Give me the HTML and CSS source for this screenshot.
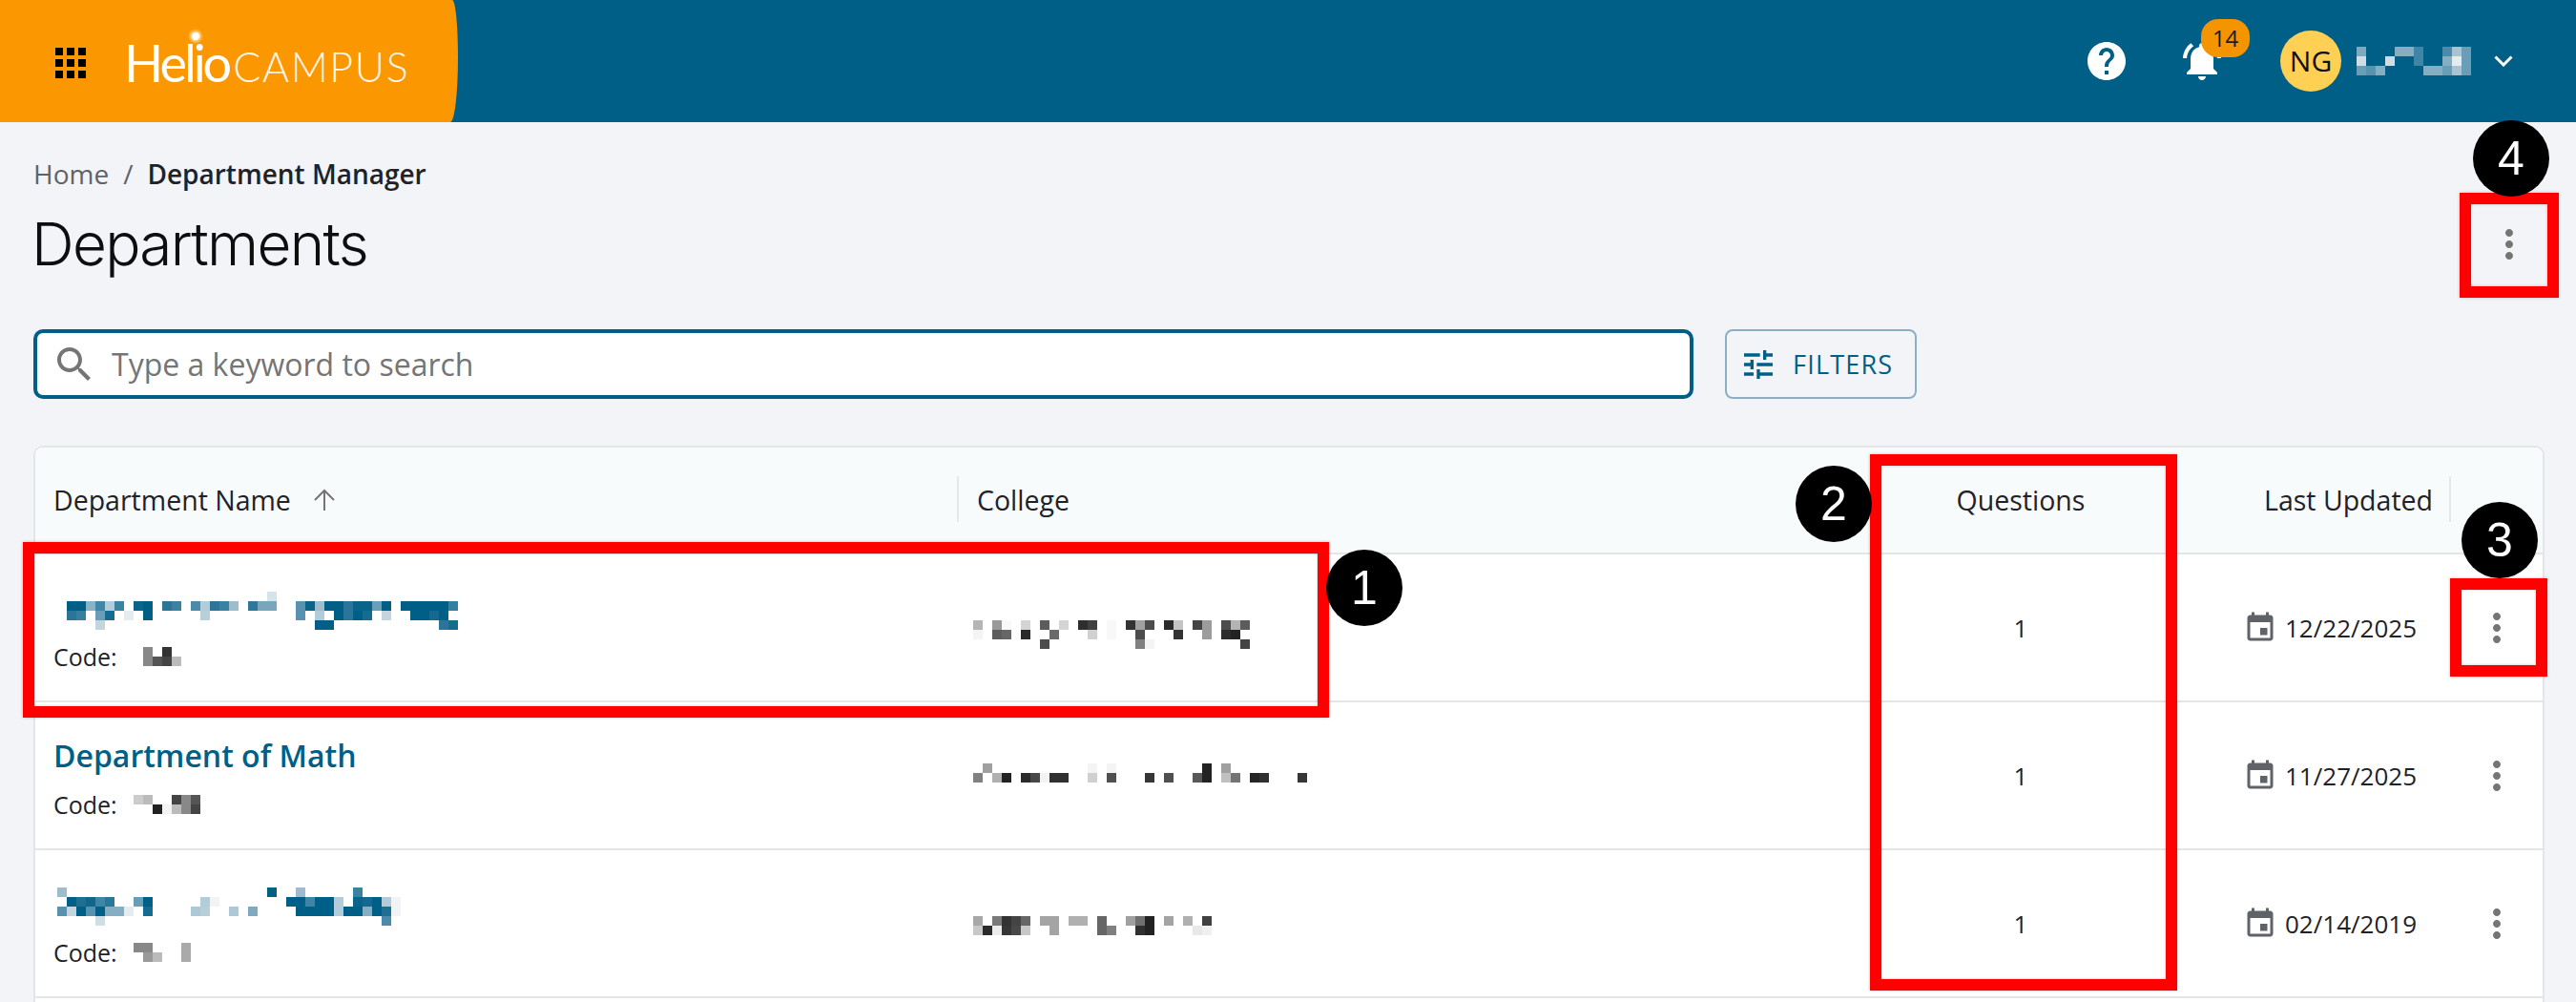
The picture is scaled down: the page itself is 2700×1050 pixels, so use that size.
FILE: index.html
```html
<!DOCTYPE html>
<html lang="en">
<head>
  <meta charset="UTF-8">
  <title>Departments</title>
  <link rel="stylesheet" href="styles.css">
</head>
<body>
  <svg class="icon-defs" aria-hidden="true">
    <symbol id="i-more" viewBox="0 0 24 24"><path d="M12 8c1.1 0 2-.9 2-2s-.9-2-2-2-2 .9-2 2 .9 2 2 2zm0 2c-1.1 0-2 .9-2 2s.9 2 2 2 2-.9 2-2-.9-2-2-2zm0 6c-1.1 0-2 .9-2 2s.9 2 2 2 2-.9 2-2-.9-2-2-2z"/></symbol>
    <symbol id="i-event" viewBox="0 0 24 24"><path d="M17 12h-5v5h5v-5zM16 1v2H8V1H6v2H5c-1.11 0-1.99.9-1.99 2L3 19c0 1.1.89 2 2 2h14c1.1 0 2-.9 2-2V5c0-1.1-.9-2-2-2h-1V1h-2zm3 18H5V8h14v11z"/></symbol>
  </svg>

  <!-- Top bar -->
  <header class="topbar">
    <div class="brand">
      <svg class="apps-icon" width="32" height="32" viewBox="0 0 32 32">
        <path d="M0 0h8v8H0zM12 0h8v8h-8zM24 0h8v8h-8zM0 12h8v8H0zM12 12h8v8h-8zM24 12h8v8h-8zM0 24h8v8H0zM12 24h8v8h-8zM24 24h8v8h-8z"/>
      </svg>
      <div class="logo"><span class="logo-helio">Helio</span><span class="logo-campus">CAMPUS</span><span class="logo-spark"></span></div>
    </div>
    <div class="topbar-tools">
      <svg class="tool-help" width="48" height="48" viewBox="0 0 24 24"><path d="M12 2C6.48 2 2 6.48 2 12s4.48 10 10 10 10-4.48 10-10S17.52 2 12 2zm1 17h-2v-2h2v2zm2.07-7.75l-.9.92C13.45 12.9 13 13.5 13 15h-2v-.5c0-1.1.45-2.1 1.17-2.83l1.24-1.26c.37-.36.59-.86.59-1.41 0-1.1-.9-2-2-2s-2 .9-2 2H8c0-2.21 1.79-4 4-4s4 1.79 4 4c0 .88-.36 1.68-.93 2.25z"/></svg>
      <div class="tool-bell">
        <svg width="48" height="48" viewBox="0 0 24 24"><path d="M7.58 4.08L6.15 2.65C3.75 4.48 2.17 7.3 2.03 10.5h2c.15-2.65 1.51-4.97 3.55-6.42zm12.39 6.42h2c-.15-3.2-1.73-6.02-4.12-7.85l-1.42 1.43c2.02 1.45 3.39 3.77 3.54 6.42zM18 11c0-3.07-1.64-5.64-4.5-6.32V4c0-.83-.67-1.5-1.5-1.5s-1.5.67-1.5 1.5v.68C7.63 5.36 6 7.92 6 11v5l-2 2v1h16v-1l-2-2v-5zm-6 11c.14 0 .27-.01.4-.04.65-.14 1.18-.58 1.44-1.18.1-.24.15-.5.15-.78h-4c.01 1.1.9 2 2.01 2z"/></svg>
        <span class="bell-count">14</span>
      </div>
      <div class="avatar">NG</div>
      <svg class="mosaic user-name" width="120" height="30" viewBox="0 0 12 3">
        <rect x="0" y="0" fill="#7fa9bf"/><rect x="4" y="0" fill="#86aec3"/><rect x="5" y="0" fill="#86aec3"/><rect x="6" y="0" fill="#3f85a5"/><rect x="9" y="0" fill="#4a8bab"/><rect x="10" y="0" fill="#a8c4d3"/><rect x="11" y="0" fill="#6a9db6"/>
        <rect x="0" y="1" fill="#cfdde5"/><rect x="3" y="1" fill="#cfdde5"/><rect x="6" y="1" fill="#3f85a5"/><rect x="9" y="1" fill="#86aec3"/><rect x="10" y="1" fill="#e4ecf0"/><rect x="11" y="1" fill="#6a9db6"/>
        <rect x="0" y="2" fill="#6a9db6"/><rect x="1" y="2" fill="#5792ae"/><rect x="2" y="2" fill="#86aec3"/><rect x="7" y="2" fill="#86aec3"/><rect x="8" y="2" fill="#86aec3"/><rect x="9" y="2" fill="#6a9db6"/><rect x="10" y="2" fill="#a8c4d3"/><rect x="11" y="2" fill="#6a9db6"/>
      </svg>
      <svg class="user-chevron" width="20" height="12" viewBox="0 0 20 12"><path d="M1.5 1.5L10 10l8.5-8.5"/></svg>
    </div>
  </header>

  <main class="page">
    <nav class="breadcrumb"><span class="crumb-home">Home</span><span class="crumb-sep">/</span><span class="crumb-current">Department Manager</span></nav>
    <div class="title-row">
      <h1>Departments</h1>
      <svg class="more-icon page-more" width="48" height="48"><use href="#i-more"/></svg>
    </div>

    <div class="search-row">
      <label class="search-box">
        <svg width="48" height="48" viewBox="0 0 24 24"><path d="M15.5 14h-.79l-.28-.27C15.41 12.59 16 11.11 16 9.5 16 5.91 13.09 3 9.5 3S3 5.91 3 9.5 5.91 16 9.5 16c1.61 0 3.09-.59 4.23-1.57l.27.28v.79l5 4.99L20.49 19l-4.99-5zm-6 0C7.01 14 5 11.99 5 9.5S7.01 5 9.5 5 14 7.01 14 9.5 11.99 14 9.5 14z"/></svg>
        <input type="text" class="search-input" placeholder="Type a keyword to search">
      </label>
      <button class="filters-button">
        <svg width="40" height="40" viewBox="0 0 24 24"><path d="M3 17v2h6v-2H3zM3 5v2h10V5H3zm10 16v-2h8v-2h-8v-2h-2v6h2zM7 9v2H3v2h4v2h2V9H7zm14 4v-2H11v2h10zm-6-4h2V7h4V5h-4V3h-2v6z"/></svg>
        FILTERS
      </button>
    </div>

    <!-- Departments table -->
    <section class="table">
      <div class="table-row table-head">
        <div class="cell cell-name">Department Name
          <svg class="sort-icon" width="26" height="24" viewBox="0 0 26 24"><path d="M13 23V2M3 12L13 2l10 10"/></svg>
        </div>
        <div class="cell cell-college">College</div>
        <div class="cell cell-questions">Questions</div>
        <div class="cell cell-updated">Last Updated</div>
        <div class="cell"></div>
      </div>

      <div class="table-row">
        <div class="cell cell-name">
          <svg class="mosaic name-mosaic" width="410" height="40" viewBox="0 0 41 4">
            <rect x="21" y="0" fill="#d5e3ea"/>
            <rect x="0" y="1" fill="#005f87"/><rect x="1" y="1" fill="#005f87"/><rect x="2" y="1" fill="#8ab2c6"/><rect x="3" y="1" fill="#3f86a7"/><rect x="4" y="1" fill="#b3ccd9"/><rect x="5" y="1" fill="#3a83a3"/><rect x="7" y="1" fill="#0b6489"/><rect x="8" y="1" fill="#005f87"/><rect x="10" y="1" fill="#2a7598"/><rect x="11" y="1" fill="#3a81a2"/><rect x="13" y="1" fill="#4a8bab"/><rect x="14" y="1" fill="#b3ccd9"/><rect x="15" y="1" fill="#2a7598"/><rect x="16" y="1" fill="#3a81a2"/><rect x="17" y="1" fill="#9dbdcd"/><rect x="19" y="1" fill="#2f789a"/><rect x="20" y="1" fill="#78a6bd"/><rect x="21" y="1" fill="#78a6bd"/><rect x="24" y="1" fill="#5792ae"/><rect x="25" y="1" fill="#0a6489"/><rect x="26" y="1" fill="#9dbdcd"/><rect x="27" y="1" fill="#005f87"/><rect x="28" y="1" fill="#005f87"/><rect x="29" y="1" fill="#2a7598"/><rect x="30" y="1" fill="#0a6489"/><rect x="31" y="1" fill="#0a6489"/><rect x="32" y="1" fill="#6b9eb7"/><rect x="33" y="1" fill="#005f87"/><rect x="35" y="1" fill="#005f87"/><rect x="36" y="1" fill="#005f87"/><rect x="37" y="1" fill="#005f87"/><rect x="38" y="1" fill="#005f87"/><rect x="39" y="1" fill="#005f87"/><rect x="40" y="1" fill="#35809f"/>
            <rect x="0" y="2" fill="#2a7598"/><rect x="1" y="2" fill="#35809f"/><rect x="3" y="2" fill="#6a9db6"/><rect x="4" y="2" fill="#146c90"/><rect x="6" y="2" fill="#e4ecf0"/><rect x="8" y="2" fill="#005f87"/><rect x="14" y="2" fill="#b8ced9"/><rect x="24" y="2" fill="#5792ae"/><rect x="26" y="2" fill="#b3ccd9"/><rect x="28" y="2" fill="#005f87"/><rect x="29" y="2" fill="#2a7598"/><rect x="30" y="2" fill="#005f87"/><rect x="31" y="2" fill="#156c91"/><rect x="33" y="2" fill="#c4d5de"/><rect x="36" y="2" fill="#005f87"/><rect x="37" y="2" fill="#005f87"/><rect x="38" y="2" fill="#15698f"/><rect x="39" y="2" fill="#005f87"/>
            <rect x="3" y="3" fill="#c4d5de"/><rect x="26" y="3" fill="#005f87"/><rect x="27" y="3" fill="#005f87"/><rect x="39" y="3" fill="#2a7598"/><rect x="40" y="3" fill="#146c90"/>
          </svg>
          <div class="dept-code">Code:
            <svg class="mosaic" width="50" height="20" viewBox="0 0 5 2">
              <rect x="1" y="0" fill="#888"/><rect x="3" y="0" fill="#333"/>
              <rect x="1" y="1" fill="#888"/><rect x="2" y="1" fill="#555"/><rect x="3" y="1" fill="#444"/><rect x="4" y="1" fill="#bbb"/>
            </svg>
          </div>
        </div>
        <div class="cell cell-college">
          <svg class="mosaic college-mosaic" width="290" height="30" viewBox="0 0 29 3">
            <rect x="0" y="0" fill="#b5b5b5"/><rect x="2" y="0" fill="#999"/><rect x="3" y="0" fill="#f8f8f8"/><rect x="5" y="0" fill="#d4d4d4"/><rect x="7" y="0" fill="#5c5c5c"/><rect x="9" y="0" fill="#d4d4d4"/><rect x="11" y="0" fill="#2e2e2e"/><rect x="12" y="0" fill="#404040"/><rect x="14" y="0" fill="#f8f8f8"/><rect x="16" y="0" fill="#333"/><rect x="17" y="0" fill="#a0a0a0"/><rect x="18" y="0" fill="#4c4c4c"/><rect x="20" y="0" fill="#2a2a2a"/><rect x="21" y="0" fill="#c4c4c4"/><rect x="23" y="0" fill="#444"/><rect x="24" y="0" fill="#9c9c9c"/><rect x="26" y="0" fill="#4c4c4c"/><rect x="27" y="0" fill="#b4b4b4"/><rect x="28" y="0" fill="#5c5c5c"/>
            <rect x="0" y="1" fill="#f4f4f4"/><rect x="2" y="1" fill="#5c5c5c"/><rect x="3" y="1" fill="#666"/><rect x="5" y="1" fill="#2a2a2a"/><rect x="8" y="1" fill="#6a6a6a"/><rect x="12" y="1" fill="#d0d0d0"/><rect x="14" y="1" fill="#f8f8f8"/><rect x="17" y="1" fill="#4c4c4c"/><rect x="21" y="1" fill="#333"/><rect x="24" y="1" fill="#9c9c9c"/><rect x="26" y="1" fill="#2c2c2c"/><rect x="27" y="1" fill="#222"/>
            <rect x="7" y="2" fill="#4c4c4c"/><rect x="17" y="2" fill="#808080"/><rect x="18" y="2" fill="#f4f4f4"/><rect x="28" y="2" fill="#444"/>
          </svg>
        </div>
        <div class="cell cell-questions">1</div>
        <div class="cell cell-updated"><svg class="event-icon" width="36" height="36"><use href="#i-event"/></svg>12/22/2025</div>
        <div class="cell cell-actions"><svg class="more-icon" width="48" height="48"><use href="#i-more"/></svg></div>
      </div>

      <div class="table-row">
        <div class="cell cell-name">
          <a class="dept-link">Department of Math</a>
          <div class="dept-code">Code:
            <svg class="mosaic" width="70" height="20" viewBox="0 0 7 2">
              <rect x="0" y="0" fill="#ccc"/><rect x="1" y="0" fill="#bbb"/><rect x="4" y="0" fill="#444"/><rect x="5" y="0" fill="#888"/><rect x="6" y="0" fill="#555"/>
              <rect x="2" y="1" fill="#222"/><rect x="3" y="1" fill="#f4f4f4"/><rect x="4" y="1" fill="#bbb"/><rect x="5" y="1" fill="#888"/><rect x="6" y="1" fill="#444"/>
            </svg>
          </div>
        </div>
        <div class="cell cell-college">
          <svg class="mosaic college-mosaic college-mosaic-mid" width="350" height="20" viewBox="0 0 35 2">
            <rect x="1" y="0" fill="#a0a0a0"/><rect x="12" y="0" fill="#f4f4f4"/><rect x="14" y="0" fill="#f4f4f4"/><rect x="24" y="0" fill="#222"/><rect x="26" y="0" fill="#a0a0a0"/>
            <rect x="0" y="1" fill="#808080"/><rect x="2" y="1" fill="#b0b0b0"/><rect x="3" y="1" fill="#222"/><rect x="5" y="1" fill="#2a2a2a"/><rect x="6" y="1" fill="#484848"/><rect x="7" y="1" fill="#f2f2f2"/><rect x="8" y="1" fill="#303030"/><rect x="9" y="1" fill="#303030"/><rect x="12" y="1" fill="#d0d0d0"/><rect x="14" y="1" fill="#505050"/><rect x="18" y="1" fill="#363636"/><rect x="20" y="1" fill="#505050"/><rect x="23" y="1" fill="#585858"/><rect x="24" y="1" fill="#222"/><rect x="26" y="1" fill="#c0c0c0"/><rect x="27" y="1" fill="#747474"/><rect x="29" y="1" fill="#252525"/><rect x="30" y="1" fill="#303030"/><rect x="34" y="1" fill="#363636"/>
          </svg>
        </div>
        <div class="cell cell-questions">1</div>
        <div class="cell cell-updated"><svg class="event-icon" width="36" height="36"><use href="#i-event"/></svg>11/27/2025</div>
        <div class="cell cell-actions"><svg class="more-icon" width="48" height="48"><use href="#i-more"/></svg></div>
      </div>

      <div class="table-row">
        <div class="cell cell-name">
          <svg class="mosaic name-mosaic name-mosaic-wide" width="360" height="40" viewBox="0 0 36 4">
            <rect x="0" y="0" fill="#9dbdcd"/><rect x="22" y="0" fill="#005f87"/><rect x="25" y="0" fill="#9dbdcd"/><rect x="31" y="0" fill="#3a81a2"/>
            <rect x="1" y="1" fill="#005f87"/><rect x="2" y="1" fill="#1f6f93"/><rect x="3" y="1" fill="#0f678c"/><rect x="4" y="1" fill="#3f85a5"/><rect x="5" y="1" fill="#2a7598"/><rect x="8" y="1" fill="#6a9db6"/><rect x="9" y="1" fill="#005f87"/><rect x="15" y="1" fill="#b3ccd9"/><rect x="16" y="1" fill="#f0f4f6"/><rect x="24" y="1" fill="#005f87"/><rect x="25" y="1" fill="#005f87"/><rect x="26" y="1" fill="#3f85a5"/><rect x="27" y="1" fill="#005f87"/><rect x="28" y="1" fill="#005f87"/><rect x="29" y="1" fill="#b3ccd9"/><rect x="31" y="1" fill="#0a6489"/><rect x="32" y="1" fill="#15698f"/><rect x="33" y="1" fill="#005f87"/><rect x="34" y="1" fill="#b3ccd9"/><rect x="35" y="1" fill="#f0f4f6"/>
            <rect x="0" y="2" fill="#5792ae"/><rect x="1" y="2" fill="#c4d5de"/><rect x="2" y="2" fill="#005f87"/><rect x="3" y="2" fill="#5792ae"/><rect x="4" y="2" fill="#005f87"/><rect x="5" y="2" fill="#86aec3"/><rect x="6" y="2" fill="#86aec3"/><rect x="7" y="2" fill="#e4ecf0"/><rect x="9" y="2" fill="#146c90"/><rect x="14" y="2" fill="#adc8d6"/><rect x="15" y="2" fill="#b8ced9"/><rect x="18" y="2" fill="#adc8d6"/><rect x="20" y="2" fill="#7fa9bf"/><rect x="25" y="2" fill="#005f87"/><rect x="26" y="2" fill="#005f87"/><rect x="27" y="2" fill="#005f87"/><rect x="28" y="2" fill="#005f87"/><rect x="29" y="2" fill="#b3ccd9"/><rect x="30" y="2" fill="#005f87"/><rect x="31" y="2" fill="#005f87"/><rect x="32" y="2" fill="#86aec3"/><rect x="33" y="2" fill="#005f87"/><rect x="34" y="2" fill="#1f6f93"/><rect x="35" y="2" fill="#f0f4f6"/>
            <rect x="4" y="3" fill="#cfdde5"/><rect x="34" y="3" fill="#4a8bab"/>
          </svg>
          <div class="dept-code">Code:
            <svg class="mosaic" width="60" height="20" viewBox="0 0 6 2">
              <rect x="0" y="0" fill="#888"/><rect x="1" y="0" fill="#888"/><rect x="5" y="0" fill="#aaa"/>
              <rect x="1" y="1" fill="#999"/><rect x="2" y="1" fill="#bbb"/><rect x="5" y="1" fill="#aaa"/>
            </svg>
          </div>
        </div>
        <div class="cell cell-college">
          <svg class="mosaic college-mosaic" width="250" height="20" viewBox="0 0 25 2">
            <rect x="0" y="0" fill="#a8a8a8"/><rect x="2" y="0" fill="#7a7a7a"/><rect x="3" y="0" fill="#333"/><rect x="4" y="0" fill="#444"/><rect x="5" y="0" fill="#666"/><rect x="7" y="0" fill="#a4a4a4"/><rect x="8" y="0" fill="#a4a4a4"/><rect x="10" y="0" fill="#b0b0b0"/><rect x="11" y="0" fill="#b0b0b0"/><rect x="13" y="0" fill="#666"/><rect x="16" y="0" fill="#a0a0a0"/><rect x="17" y="0" fill="#707070"/><rect x="18" y="0" fill="#222"/><rect x="20" y="0" fill="#a4a4a4"/><rect x="22" y="0" fill="#b0b0b0"/><rect x="24" y="0" fill="#404040"/>
            <rect x="0" y="1" fill="#c8c8c8"/><rect x="1" y="1" fill="#2a2a2a"/><rect x="2" y="1" fill="#ececec"/><rect x="3" y="1" fill="#363636"/><rect x="4" y="1" fill="#484848"/><rect x="5" y="1" fill="#c8c8c8"/><rect x="8" y="1" fill="#a4a4a4"/><rect x="13" y="1" fill="#666"/><rect x="14" y="1" fill="#808080"/><rect x="17" y="1" fill="#303030"/><rect x="18" y="1" fill="#222"/><rect x="23" y="1" fill="#e8e8e8"/><rect x="24" y="1" fill="#f0f0f0"/>
          </svg>
        </div>
        <div class="cell cell-questions">1</div>
        <div class="cell cell-updated"><svg class="event-icon" width="36" height="36"><use href="#i-event"/></svg>02/14/2019</div>
        <div class="cell cell-actions"><svg class="more-icon" width="48" height="48"><use href="#i-more"/></svg></div>
      </div>
    </section>
  </main>

  <!-- Annotations drawn over the screenshot -->
  <div class="mark-box box-name"></div>
  <div class="mark-box box-questions"></div>
  <div class="mark-box box-row-menu"></div>
  <div class="mark-box box-page-menu"></div>
  <div class="mark-num num-1">1</div>
  <div class="mark-num num-2">2</div>
  <div class="mark-num num-3">3</div>
  <div class="mark-num num-4">4</div>
</body>
</html>
```

FILE: styles.css
```css
body {
  position: relative;
  margin: 0;
  height: 1050px;
  overflow: hidden;
  background-color: #f2f4f8;
  color: #1f2226;
  font-family: "Open Sans", sans-serif;
}

.icon-defs {
  display: none;
}

/* Top bar */
.topbar {
  display: flex;
  justify-content: space-between;
  height: 128px;
  background-color: #005f87;
}

.brand {
  display: flex;
  align-items: center;
  box-sizing: border-box;
  width: 480px;
  padding-left: 58px;
  background-color: #fb9700;
  border-radius: 0 6px 8px 0 / 0 60px 68px 0;
}

.apps-icon {
  margin-top: 4px;
  fill: #000;
}

.logo {
  position: relative;
  display: flex;
  align-items: baseline;
  margin-left: 40px;
  margin-top: 4px;
  color: #fff;
  font-family: Lato, sans-serif;
  font-weight: 300;
  line-height: 1;
}

.logo-helio {
  font-size: 54px;
  font-weight: 400;
  letter-spacing: -3px;
}

.logo-campus {
  margin-left: 4px;
  font-size: 43px;
  letter-spacing: 1.6px;
  font-weight: 300;
  opacity: 0.9;
}

.logo-spark {
  position: absolute;
  left: 67px;
  top: -9px;
  width: 16px;
  height: 16px;
  border-radius: 50%;
  background: radial-gradient(circle, #fff 0 30%, rgba(255, 240, 200, 0.5) 45%, rgba(255, 240, 200, 0) 72%);
}

.topbar-tools {
  display: flex;
  align-items: center;
  padding-right: 66px;
}

.tool-help {
  fill: #fff;
}

.tool-bell {
  position: relative;
  height: 48px;
  margin-left: 52px;
}

.tool-bell svg {
  display: block;
  fill: #fff;
}

.bell-count {
  position: absolute;
  left: 23px;
  top: -20px;
  width: 51px;
  height: 40px;
  border-radius: 18px;
  background-color: #f49500;
  color: #1c1c1c;
  font-size: 24px;
  line-height: 40px;
  text-align: center;
}

.avatar {
  width: 64px;
  height: 64px;
  margin-left: 58px;
  border-radius: 50%;
  background-color: #ffd054;
  color: #111;
  font-size: 30px;
  line-height: 64px;
  text-align: center;
}

.user-name {
  margin-left: 16px;
}

.user-chevron {
  margin-left: 24px;
  fill: none;
  stroke: #fff;
  stroke-width: 3;
}

/* Blurred out names */
.mosaic {
  display: block;
  flex: none;
  shape-rendering: crispEdges;
}

.mosaic rect {
  width: 1px;
  height: 1px;
}

/* Page heading */
.page {
  padding: 0 33px 0 35px;
}

.breadcrumb {
  display: flex;
  height: 36px;
  margin-top: 36px;
  font-size: 28px;
  line-height: 36px;
}

.crumb-home {
  color: #5f6368;
}

.crumb-sep {
  margin: 0 15px;
  color: #5f6368;
}

.crumb-current {
  font-weight: 600;
}

.title-row {
  display: flex;
  justify-content: space-between;
  align-items: center;
  height: 80px;
  margin-top: 16px;
}

h1 {
  margin: 0 0 0 -2px;
  color: #0c0e10;
  font-family: Inter, sans-serif;
  font-size: 62px;
  font-weight: 300;
  letter-spacing: -1.7px;
  line-height: 80px;
}

.more-icon {
  fill: #757575;
}

.page-more {
  margin-right: 13px;
}

/* Search and filters */
.search-row {
  display: flex;
  gap: 33px;
  margin-top: 49px;
}

.search-box {
  display: flex;
  align-items: center;
  box-sizing: border-box;
  width: 1740px;
  height: 73px;
  padding-left: 15px;
  border: 4px solid #005f87;
  border-radius: 10px;
  background-color: #fff;
}

.search-box svg {
  fill: #757575;
}

.search-input {
  flex: 1;
  margin-left: 15px;
  padding: 0;
  border: none;
  outline: none;
  color: #757575;
  font-family: "Open Sans", sans-serif;
  font-size: 32px;
}

.search-input::placeholder {
  color: #757575;
  opacity: 1;
}

.filters-button {
  display: flex;
  align-items: center;
  gap: 16px;
  box-sizing: border-box;
  width: 201px;
  height: 73px;
  padding: 0 0 0 13px;
  border: 2px solid #8bb0c4;
  border-radius: 8px;
  background-color: #f2f4f8;
  color: #005f87;
  font-family: "Open Sans", sans-serif;
  font-size: 27px;
  letter-spacing: 1.2px;
}

.filters-button svg {
  fill: #005f87;
}

/* Table */
.table {
  height: 600px;
  margin-top: 49px;
  border: 2px solid #e3e5e8;
  border-radius: 10px 10px 0 0;
  background-color: #fff;
}

.table-row {
  display: grid;
  grid-template-columns: 966px 966px 298px 302px 1fr;
  height: 155px;
  box-sizing: border-box;
  border-bottom: 2px solid #e3e5e8;
}

.table-head {
  height: 112px;
  border-radius: 8px 8px 0 0;
  background-color: #f8fbfc;
  font-size: 28.5px;
}

.cell {
  display: flex;
  align-items: center;
  box-sizing: border-box;
}

.table-row .cell-name {
  flex-direction: column;
  align-items: flex-start;
  justify-content: flex-start;
  padding: 36px 0 0 19px;
}

.table-head .cell-name {
  flex-direction: row;
  align-items: center;
  padding-top: 0;
}

.table-head .cell-college {
  position: relative;
}

.table-head .cell-college::before,
.table-head .cell-updated::after {
  content: "";
  position: absolute;
  top: 30px;
  height: 48px;
  width: 2px;
  background-color: #e6e8ea;
}

.table-head .cell-college::before {
  left: 0;
}

.table-head .cell-updated {
  position: relative;
}

.table-head .cell-updated::after {
  right: 0;
}

.sort-icon {
  margin-left: 22px;
  fill: none;
  stroke: #757575;
  stroke-width: 2;
}

.name-mosaic {
  margin: 3px 0 -3px 14px;
}

.name-mosaic-wide {
  margin-left: 4px;
}

.dept-link {
  color: #005f87;
  font-size: 32px;
  font-weight: 600;
  line-height: 40px;
}

.dept-code {
  display: flex;
  align-items: center;
  gap: 17px;
  height: 36px;
  margin-top: 13px;
  font-size: 25px;
  line-height: 36px;
}

.cell-college {
  padding-left: 21px;
  align-items: flex-start;
}

.table-head .cell-college {
  align-items: center;
}

.college-mosaic {
  margin: 69px 0 0 -4px;
}

.college-mosaic-mid {
  margin-top: 64px;
}

.cell-questions {
  justify-content: center;
  font-size: 26px;
}

.table-head .cell-questions {
  font-size: 28.5px;
}

.cell-updated {
  justify-content: flex-end;
  padding-right: 36px;
  font-size: 26px;
}

.table-head .cell-updated {
  padding-right: 19px;
  font-size: 28.5px;
}

.event-icon {
  margin-right: 8px;
  fill: #5f6368;
}

.cell-actions {
  justify-content: center;
}

/* Red boxes and numbered circles */
.mark-box {
  position: absolute;
  box-sizing: border-box;
  border: 12px solid #ff0000;
  box-shadow: 0 0 3px rgba(0, 0, 0, 0.25), inset 0 0 3px rgba(0, 0, 0, 0.25);
}

.box-name {
  left: 24px;
  top: 568px;
  width: 1369px;
  height: 184px;
}

.box-questions {
  left: 1960px;
  top: 476px;
  width: 322px;
  height: 562px;
}

.box-row-menu {
  left: 2568px;
  top: 606px;
  width: 102px;
  height: 103px;
}

.box-page-menu {
  left: 2578px;
  top: 202px;
  width: 104px;
  height: 110px;
}

.mark-num {
  position: absolute;
  width: 80px;
  height: 80px;
  border-radius: 50%;
  background-color: #000;
  color: #fff;
  font-family: "Liberation Sans", sans-serif;
  font-size: 50px;
  line-height: 80px;
  text-align: center;
}

.num-1 {
  left: 1390px;
  top: 576px;
}

.num-2 {
  left: 1882px;
  top: 488px;
}

.num-3 {
  left: 2580px;
  top: 526px;
}

.num-4 {
  left: 2592px;
  top: 126px;
}
```
